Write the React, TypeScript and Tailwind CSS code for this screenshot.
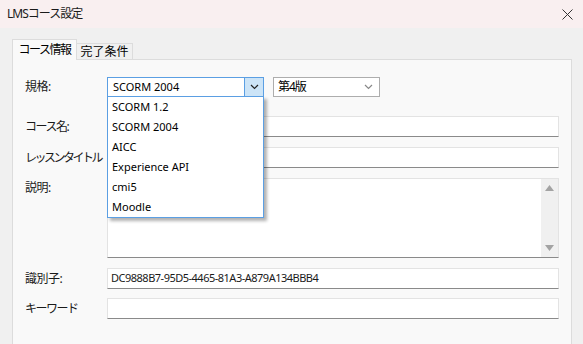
const FONT = { fontFamily: '"Noto Sans", "Noto Sans CJK JP", sans-serif' };

function Chevron({ className }: { className?: string }) {
    return (
        <svg width="9" height="6" viewBox="0 0 9 6" className={className}>
            <path d="M1 1 L4.5 4.5 L8 1" fill="none" stroke="currentColor" strokeWidth="1.2" />
        </svg>
    );
}

function Label({ children, className = "tracking-[-1.5px]" }: { children: React.ReactNode; className?: string }) {
    return (
        <span className={`w-[82px] shrink-0 whitespace-nowrap text-[12px] text-[#1a1a1a] ${className}`}>
            {children}
        </span>
    );
}

function TextInput({ value }: { value?: string }) {
    return (
        <div className="flex-1 h-[21px] bg-white border border-[#e3e3e3] border-b-[#8a8a8a] flex items-center px-[3px] text-[11px] tracking-[-0.5px] text-[#1a1a1a]">
            {value}
        </div>
    );
}

export default function App() {
    const standards = ["SCORM 1.2", "SCORM 2004", "AICC", "Experience API", "cmi5", "Moodle"];

    return (
        <div className="w-[583px] h-[344px] bg-[#f0f0f0] overflow-hidden relative" style={FONT}>
            {/* Title bar */}
            <div className="h-[28px] bg-[#f9eff0] flex items-center justify-between pl-[7px] pr-[10px]">
                <span className="text-[12px] tracking-[-1px] text-[#1a1a1a]">LMSコース設定</span>
                <svg width="11" height="11" viewBox="0 0 11 11">
                    <path d="M0.5 0.5 L10.5 10.5 M10.5 0.5 L0.5 10.5" stroke="#333" strokeWidth="1" />
                </svg>
            </div>

            {/* Tabs */}
            <div className="pl-[12px] pr-[11px] pt-[11px]">
                <div className="flex items-end h-[20px]">
                    <div className="h-[21px] w-[65px] bg-[#f9f9f9] border border-b-0 border-[#dcdcdc] flex items-center justify-center text-[12px] tracking-[-1.5px] text-black relative z-10 -mb-px">
                        コース情報
                    </div>
                    <div className="h-[16px] w-[56px] bg-[#f0f0f0] border border-l-0 border-b-0 border-[#dcdcdc] flex items-center justify-center text-[12px] text-black">
                        完了条件
                    </div>
                </div>

                {/* Panel */}
                <div className="bg-[#f9f9f9] border border-[#dcdcdc] h-[300px] pl-[12px] pr-[12px] pt-[17px] relative">
                    <div className="flex items-center h-[20px]">
                        <Label className="tracking-[-0.5px]">規格:</Label>
                        <div className="w-[157px] h-[20px] bg-white border border-[#5b9fe3] flex">
                            <span className="flex-1 flex items-center px-[5px] text-[11px] text-black">SCORM 2004</span>
                            <div className="w-[19px] bg-[#cce4f7] border-l border-[#5b9fe3] flex items-center justify-center text-[#222]">
                                <Chevron />
                            </div>
                        </div>
                        <div className="ml-[9px] w-[107px] h-[20px] bg-white border border-[#adadad] flex items-center justify-between pl-[4px] pr-[6px]">
                            <span className="text-[12px] tracking-[-1px] text-black">第4版</span>
                            <Chevron className="text-[#888]" />
                        </div>
                    </div>

                    <div className="flex items-center mt-[19px]">
                        <Label>コース名:</Label>
                        <TextInput />
                    </div>
                    <div className="flex items-center mt-[10px]">
                        <Label className="tracking-[-2.5px]">レッスンタイトル</Label>
                        <TextInput />
                    </div>
                    <div className="flex items-start mt-[10px]">
                        <Label className="tracking-[-0.5px] mt-[1px]">説明:</Label>
                        <div className="flex-1 h-[80px] bg-white border border-[#e3e3e3] border-b-[#8a8a8a] flex justify-end">
                            <div className="w-[17px] bg-[#f0f0f0] flex flex-col items-center justify-between py-[6px]">
                                <svg width="9" height="6" viewBox="0 0 9 6"><path d="M0 6 L4.5 0 L9 6 Z" fill="#a3a3a3" /></svg>
                                <svg width="9" height="6" viewBox="0 0 9 6"><path d="M0 0 L4.5 6 L9 0 Z" fill="#a3a3a3" /></svg>
                            </div>
                        </div>
                    </div>
                    <div className="flex items-center mt-[10px]">
                        <Label className="tracking-[-0.5px]">識別子:</Label>
                        <TextInput value="DC9888B7-95D5-4465-81A3-A879A134BBB4" />
                    </div>
                    <div className="flex items-center mt-[9px]">
                        <Label>キーワード</Label>
                        <TextInput />
                    </div>

                    {/* Open dropdown list */}
                    <div className="absolute left-[94px] top-[36px] w-[157px] bg-white border border-[#5b9fe3] shadow-[3px_3px_3px_rgba(0,0,0,0.3)] z-20">
                        {standards.map((s) => (
                            <div key={s} className="h-[20px] flex items-center px-[4px] text-[11px] text-black">
                                {s}
                            </div>
                        ))}
                    </div>
                </div>
            </div>
        </div>
    );
}
